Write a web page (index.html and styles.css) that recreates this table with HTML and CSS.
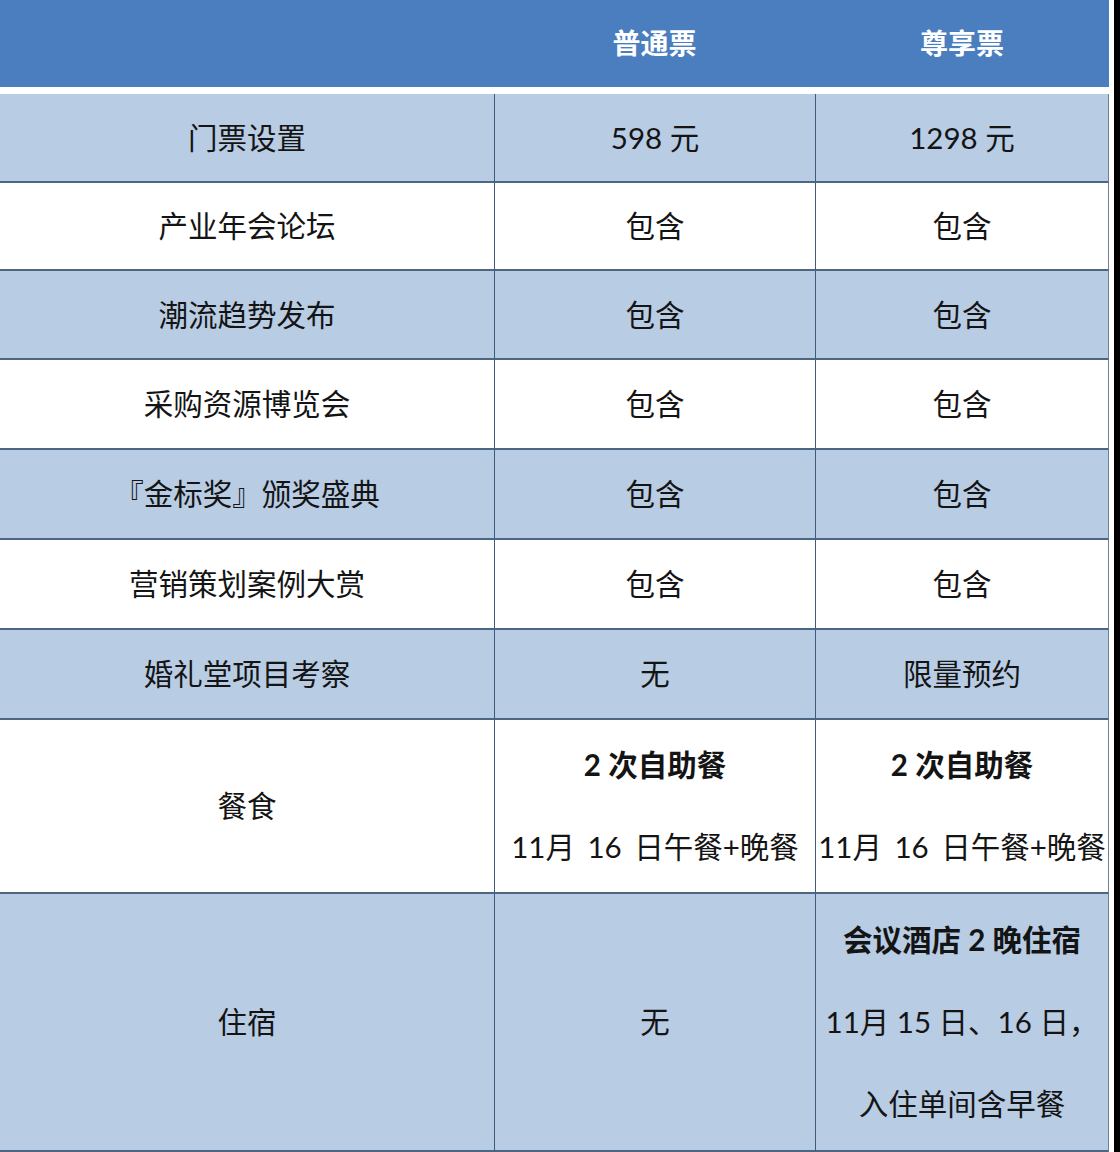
FILE: index.html
```html
<!DOCTYPE html>
<html lang="zh-CN">
<head>
<meta charset="utf-8">
<title>票种对比</title>
<link rel="stylesheet" href="styles.css">
</head>
<body>
<div class="page">
  <table class="tickets">
    <colgroup>
      <col class="c1">
      <col class="c2">
      <col class="c3">
    </colgroup>
    <thead>
      <tr>
        <th></th>
        <th>普通票</th>
        <th>尊享票</th>
      </tr>
    </thead>
    <tbody>
      <tr class="alt r1"><td>门票设置</td><td>598 元</td><td>1298 元</td></tr>
      <tr class="r2"><td>产业年会论坛</td><td>包含</td><td>包含</td></tr>
      <tr class="alt r3"><td>潮流趋势发布</td><td>包含</td><td>包含</td></tr>
      <tr class="r4"><td>采购资源博览会</td><td>包含</td><td>包含</td></tr>
      <tr class="alt r4"><td>『金标奖』颁奖盛典</td><td>包含</td><td>包含</td></tr>
      <tr class="r4"><td>营销策划案例大赏</td><td>包含</td><td>包含</td></tr>
      <tr class="alt r4"><td>婚礼堂项目考察</td><td>无</td><td>限量预约</td></tr>
      <tr class="r8">
        <td>餐食</td>
        <td><div class="ln b">2 次自助餐</div><div class="ln wide">11月 16 日午餐+晚餐</div></td>
        <td><div class="ln b">2 次自助餐</div><div class="ln wide">11月 16 日午餐+晚餐</div></td>
      </tr>
      <tr class="alt r9">
        <td>住宿</td>
        <td>无</td>
        <td><div class="ln b">会议酒店 2 晚住宿</div><div class="ln">11月 15 日、16 日，</div><div class="ln">入住单间含早餐</div></td>
      </tr>
    </tbody>
  </table>
</div>
</body>
</html>
```
FILE: styles.css
```css
html {
  background: #000;
}
body {
  margin: 0;
}
.page {
  width: 1114px;
  height: 1152px;
  background: #fff;
  overflow: hidden;
}
.tickets {
  width: 1109px;
  border-collapse: separate;
  border-spacing: 0;
  table-layout: fixed;
  font-family: Lato, "Noto Sans CJK SC", sans-serif;
  color: #141414;
}
.c1 { width: 494px; }
.c2 { width: 321px; }
.c3 { width: 294px; }

.tickets th {
  height: 83px;
  padding: 0 0 4px;
  background: #4b7ebf;
  border-bottom: 7px solid #fff;
  color: #fff;
  font-size: 28px;
  font-weight: 700;
  text-align: center;
  vertical-align: middle;
}
.tickets td {
  padding: 0;
  font-size: 29.5px;
  text-align: center;
  vertical-align: middle;
  background: #fff;
  border-bottom: 2px solid #4c6684;
  line-height: 1.2;
}
.tickets td + td {
  border-left: 1px solid #3e5b7b;
}
.tickets td:last-child {
  border-right: 1px solid #6f8195;
}
.tickets tr.alt td {
  background: #b8cce4;
}
.r1 td { height: 87px; }
.r2 td { height: 86px; }
.r3 td { height: 87px; }
.r4 td { height: 88px; }
.r8 td { height: 172px; }
.r9 td { height: 256px; }

.ln {
  line-height: 82px;
  white-space: nowrap;
}
.ln.b {
  font-weight: 700;
}
.ln.wide {
  word-spacing: 5px;
}
```
